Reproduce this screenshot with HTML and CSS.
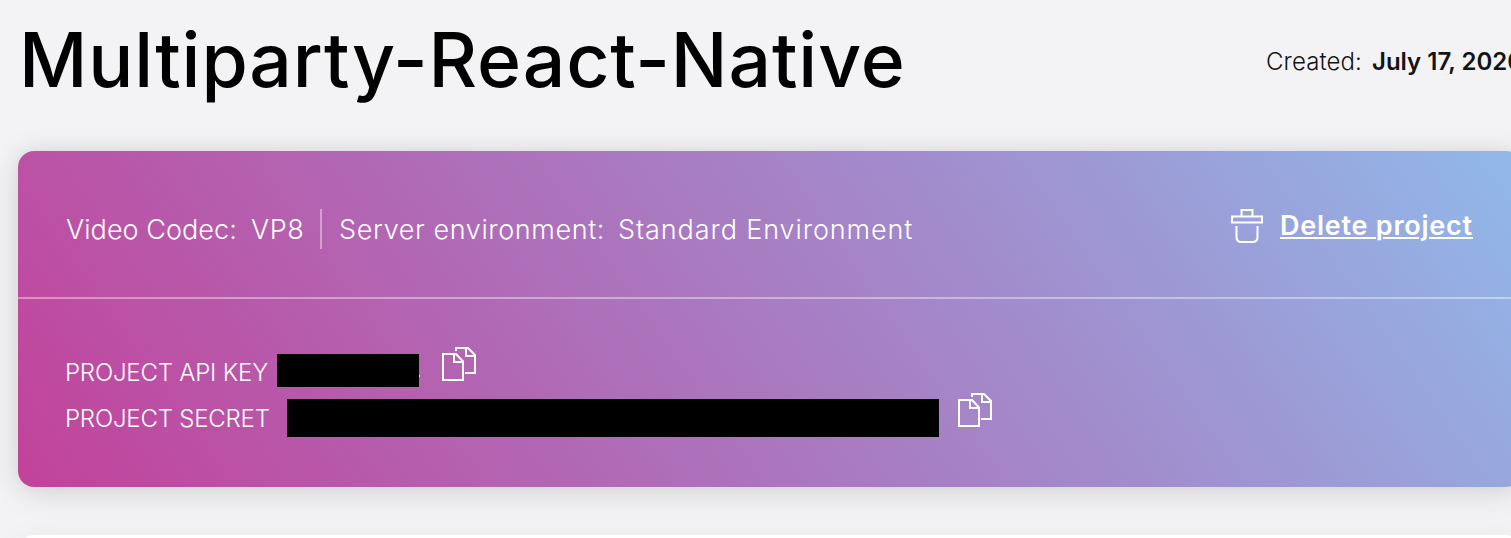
FILE: index.html
```html
<!DOCTYPE html>
<html lang="en">
<head>
<meta charset="utf-8">
<title>Multiparty-React-Native</title>
<link rel="stylesheet" href="styles.css">
</head>
<body>
<svg class="defs" width="0" height="0" aria-hidden="true">
  <symbol id="copy" viewBox="0 0 36 36">
    <path d="M2 8h13l7 7.5V34H2zM13 8v8h9M15 5V2h12l7 7v18H24M25 2v8h9"/>
  </symbol>
</svg>
<main class="page">
  <header class="header">
    <h1 class="title">Multiparty-React-Native</h1>
    <p class="created"><span class="created-label">Created:</span><strong class="created-date">July 17, 2020</strong></p>
  </header>
  <section class="card">
    <div class="summary">
      <div class="details">
        <span class="codec">Video Codec:</span><span class="codec-value">VP8</span>
        <span class="divider"></span>
        <span class="environment">Server environment:</span><span class="environment-value">Standard Environment</span>
      </div>
      <div class="delete">
        <svg class="trash" width="34" height="36" viewBox="0 0 34 36"><path d="M11.5 8V2h11v6M2 8.500h30v6H2zM6.500 18v11q0 5 5 5h11q5 0 5-5V18"/></svg>
        <a class="delete-link" href="#">Delete project</a>
      </div>
    </div>
    <div class="keys">
      <div class="key-row">
        <span class="key-label api">PROJECT API KEY</span><span class="mask mask-key"></span><span class="speck"></span>
        <svg class="copy copy-key" width="36" height="36"><use href="#copy"/></svg>
      </div>
      <div class="key-row">
        <span class="key-label secret">PROJECT SECRET</span><span class="mask mask-secret"></span>
        <svg class="copy copy-secret" width="36" height="36"><use href="#copy"/></svg>
      </div>
    </div>
  </section>
  <section class="next-card"></section>
</main>
</body>
</html>
```
FILE: styles.css
```css
* { box-sizing: border-box; }
html { height: 538px; overflow: hidden; }
body { margin: 0; height: 538px; overflow: hidden; background: #f3f3f5; color: #131415; font-family: Inter, "Liberation Sans", sans-serif; }
.defs { position: absolute; }
.page { width: 1522px; height: 538px; overflow: hidden; padding-left: 18px; }
.header { display: flex; justify-content: space-between; height: 151px; white-space: nowrap; }
.title { margin: 14px 0 0 1px; font-size: 75px; line-height: 91px; font-weight: 500; letter-spacing: .88px; color: #000; }
.created { display: flex; width: 256px; margin: 46px 0 0; font-size: 24px; line-height: 31px; }
.created-label { width: 106px; font-weight: 300; letter-spacing: .1px; flex: none; }
.created-date { font-weight: 600; letter-spacing: 0; }
.card { height: 336px; border-radius: 16px; color: #fff; background: linear-gradient(55deg, #c2429b 0%, #ae6fb9 39%, #a18ecd 66%, #91b9ea 100%); box-shadow: 0 4px 32px rgba(0,0,0,.14), 0 0 12px rgba(0,0,0,.03); }
.summary { display: flex; justify-content: space-between; height: 148px; padding: 57px 49px 0 48px; border-bottom: 2px solid rgba(255,255,255,.4); }
.details { display: flex; height: 42px; font-size: 27px; line-height: 44px; font-weight: 300; white-space: nowrap; }
.codec { width: 185px; letter-spacing: .05px; }
.codec-value { width: 55px; letter-spacing: .6px; }
.divider { width: 2px; height: 40px; margin: 1px 17px 0 14px; background: rgba(255,255,255,.4); }
.environment { width: 279px; letter-spacing: .6px; }
.environment-value { letter-spacing: .9px; }
.delete { display: flex; gap: 16px; }
.trash, .copy { fill: none; stroke: #fff; stroke-width: 2; flex: none; }
.delete-link { width: 193px; height: 34px; color: #fff; font-size: 27px; line-height: 36px; font-weight: 600; letter-spacing: .76px; text-decoration-thickness: 2px; text-underline-offset: 2px; white-space: nowrap; }
.keys { padding: 47px 0 0 48px; }
.key-row { display: flex; height: 46px; }
.key-label { margin: 12px 0 0 -1px; font-size: 24px; line-height: 30px; font-weight: 300; letter-spacing: -.2px; white-space: nowrap; }
.api { width: 212px; }
.secret { width: 222px; }
.mask { background: #000; }
.mask-key { width: 142px; height: 33px; margin-top: 8px; }
.mask-secret { width: 652px; height: 38px; margin-top: 7px; }
.speck { width: 1px; height: 2px; margin-top: 29px; background: rgba(255,255,255,.7); }
.copy-key { margin-left: 21px; }
.copy-secret { margin-left: 18px; }
.next-card { height: 60px; margin-top: 48px; border-radius: 16px; background: #fff; box-shadow: 0 4px 32px rgba(0,0,0,.05); }
```
